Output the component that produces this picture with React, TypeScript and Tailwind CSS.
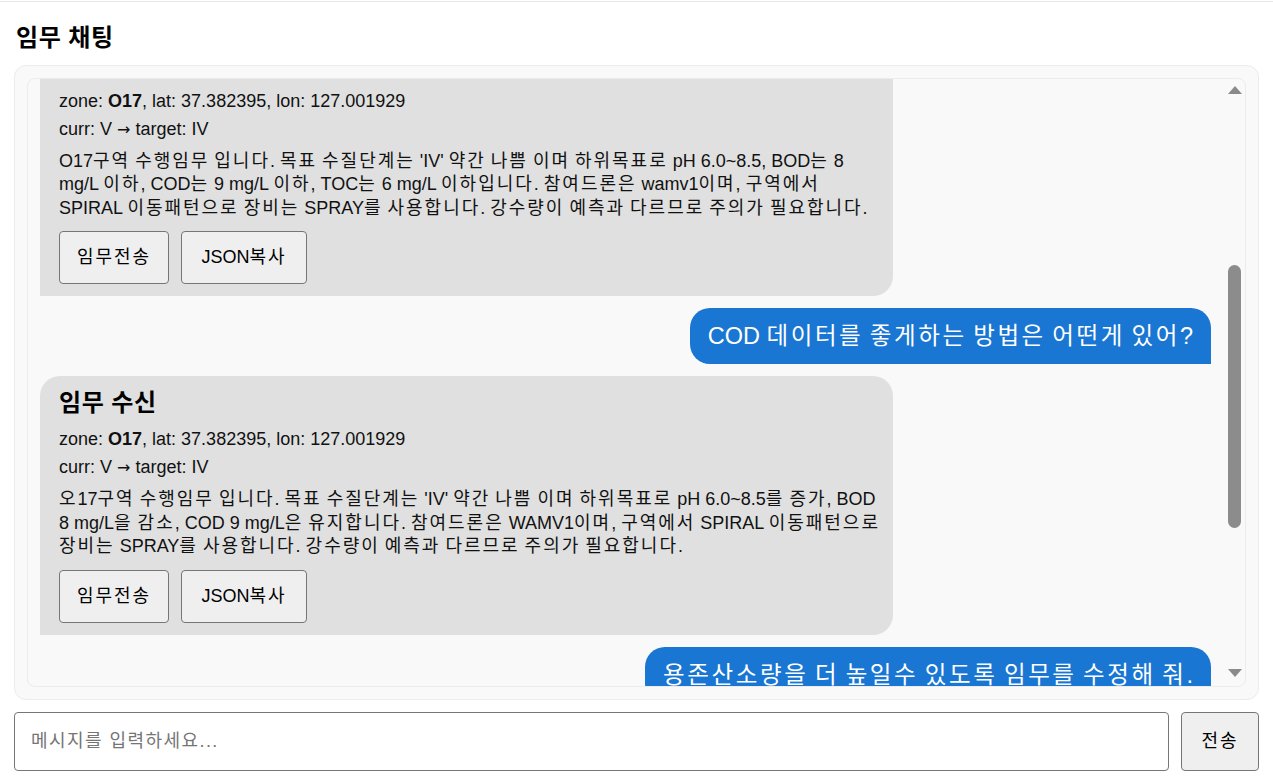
import { useLayoutEffect, useRef } from 'react'

type Mission = {
  title?: string
  zone: string
  lat: string
  lon: string
  curr: string
  target: string
  text: string
}

type Message =
  | { id: number; role: 'user'; text: string }
  | { id: number; role: 'mission'; mission: Mission; anchor?: boolean }

const base = { zone: 'O17', lat: '37.382395', lon: '127.001929', curr: 'V', target: 'IV' }

const messages: Message[] = [
  { id: 1, role: 'user', text: 'O17 구역 수질 개선 임무를 만들어 줘.' },
  {
    id: 2,
    role: 'mission',
    mission: {
      ...base,
      title: '임무 수신',
      text: "O17구역 수행임무 입니다. 목표 수질단계는 'IV' 약간 나쁨 이며 하위목표로 pH 6.0~8.5, BOD는 8 mg/L 이하, COD는 9 mg/L 이하, TOC는 6 mg/L 이하입니다. 참여드론은 wamv1이며, 구역에서 SPIRAL 이동패턴으로 장비는 SPRAY를 사용합니다.",
    },
  },
  {
    id: 3,
    role: 'mission',
    anchor: true,
    mission: {
      ...base,
      title: '임무 수신',
      text: "O17구역 수행임무 입니다. 목표 수질단계는 'IV' 약간 나쁨 이며 하위목표로 pH 6.0~8.5, BOD는 8 mg/L 이하, COD는 9 mg/L 이하, TOC는 6 mg/L 이하입니다. 참여드론은 wamv1이며, 구역에서 SPIRAL 이동패턴으로 장비는 SPRAY를 사용합니다. 강수량이 예측과 다르므로 주의가 필요합니다.",
    },
  },
  { id: 4, role: 'user', text: 'COD 데이터를 좋게하는 방법은 어떤게 있어?' },
  {
    id: 5,
    role: 'mission',
    mission: {
      ...base,
      title: '임무 수신',
      text: "오17구역 수행임무 입니다. 목표 수질단계는 'IV' 약간 나쁨 이며 하위목표로 pH 6.0~8.5를 증가, BOD 8 mg/L을 감소, COD 9 mg/L은 유지합니다. 참여드론은 WAMV1이며, 구역에서 SPIRAL 이동패턴으로 장비는 SPRAY를 사용합니다. 강수량이 예측과 다르므로 주의가 필요합니다.",
    },
  },
  { id: 6, role: 'user', text: '용존산소량을 더 높일수 있도록 임무를 수정해 줘.' },
  {
    id: 7,
    role: 'mission',
    mission: {
      ...base,
      title: '임무 수신',
      text: "O17구역 수행임무 입니다. 목표 수질단계는 'IV' 약간 나쁨 이며 하위목표로 DO 7 mg/L 이상을 증가, BOD 8 mg/L을 감소, COD 9 mg/L은 유지합니다. 참여드론은 WAMV1이며, 구역에서 SPIRAL 이동패턴으로 장비는 AERATOR를 사용합니다.",
    },
  },
]

// hangul in the original font runs wider than Noto CJK, so give those runs a bit of tracking
const hangul = /([\uAC00-\uD7A3]+)/

function K({ children, tight }: { children: string; tight?: boolean }) {
  return (
    <>
      {children.split(hangul).map((part, i) =>
        hangul.test(part) ? (
          <span key={i} className={tight ? 'tracking-[0.03em]' : 'tracking-[0.11em]'}>
            {part}
          </span>
        ) : (
          part
        ),
      )}
    </>
  )
}

const btn = 'h-[53px] rounded-[4px] border border-[#767676] bg-[#efefef] text-[18px] text-black'

function MissionBubble({ mission, anchorRef }: { mission: Mission; anchorRef?: React.Ref<HTMLDivElement> }) {
  return (
    <div
      ref={anchorRef}
      className="w-[853px] rounded-[20px] rounded-bl-none bg-[#e0e0e0] pt-[12px] pr-[12px] pb-[12px] pl-[19px] text-[18px] text-[#111]"
    >
      {mission.title ? (
        <h3 className="text-[24px] leading-[30px] font-bold text-black">
          <K tight>{mission.title}</K>
        </h3>
      ) : null}
      <p className="mt-[9px] leading-[24px]">
        zone: <b>{mission.zone}</b>, lat: {mission.lat}, lon: {mission.lon}
      </p>
      <p className="mt-[4px] leading-[24px]">
        curr: {mission.curr} <span className="[font-family:'DejaVu_Sans',sans-serif] text-[16px]">→</span> target:{' '}
        {mission.target}
      </p>
      <p className="mt-[8px] leading-[23.5px]">
        <K>{mission.text}</K>
      </p>
      <div className="mt-[11px] flex gap-[12px]">
        <button type="button" className={btn + ' w-[110px]'}>
          <K>임무전송</K>
        </button>
        <button type="button" className={btn + ' w-[126px]'}>
          JSON<K>복사</K>
        </button>
      </div>
    </div>
  )
}

function ScrollTrack() {
  return (
    <div className="flex w-[21px] shrink-0 flex-col items-center pt-[7px] pb-[9px]">
      <svg width="14" height="8" viewBox="0 0 14 8" className="ml-[1px]">
        <path d="M7 0 L14 8 L0 8 Z" fill="#8a8a8a" />
      </svg>
      <div className="mt-[171px] h-[263px] w-[13px] rounded-full bg-[#8c8c8c]" />
      <div className="flex-1" />
      <svg width="14" height="8" viewBox="0 0 14 8" className="ml-[1px]">
        <path d="M0 0 L14 0 L7 8 Z" fill="#8a8a8a" />
      </svg>
    </div>
  )
}

export default function App() {
  const scrollRef = useRef<HTMLDivElement>(null)
  const anchorRef = useRef<HTMLDivElement>(null)

  useLayoutEffect(() => {
    const box = scrollRef.current
    const anchor = anchorRef.current
    if (!box || !anchor) return
    // keep the second mission bubble 41px above the visible top
    box.scrollTop = anchor.offsetTop + 41
  }, [])

  return (
    <div className="h-screen bg-white px-[14px] [font-family:'Liberation_Sans','Noto_Sans_CJK_KR',sans-serif] text-[#111]">
      <div className="-mx-[14px] h-[2px] border-b border-[#e8e8e8]" />
      <h2 className="pt-[21px] pl-[2px] text-[24px] leading-[30px] font-bold text-black">
        <K tight>임무 채팅</K>
      </h2>

      <div className="mt-[12px] h-[635px] rounded-[12px] border border-[#ececec] bg-[#f9f9f9] p-[12px]">
        <div className="flex h-full overflow-hidden rounded-[8px] border border-[#ececec] bg-[#f9f9f9]">
          <div ref={scrollRef} className="relative min-w-0 flex-1 overflow-y-auto [scrollbar-width:none]">
            <div className="flex flex-col gap-[12px] py-[12px] pr-[13px] pl-[12px]">
              {messages.map((m) =>
                m.role === 'user' ? (
                  <div key={m.id} className="flex justify-end">
                    <div className="rounded-[20px] rounded-br-none bg-[#1976d2] px-[18px] py-[12px] text-[23.5px] leading-[32px] text-white">
                      <K>{m.text}</K>
                    </div>
                  </div>
                ) : (
                  <div key={m.id} className="flex">
                    <MissionBubble mission={m.mission} anchorRef={m.anchor ? anchorRef : undefined} />
                  </div>
                ),
              )}
            </div>
          </div>
          <ScrollTrack />
        </div>
      </div>

      <div className="mt-[12px] flex gap-[12px]">
        <input
          placeholder="메시지를 입력하세요..."
          className="h-[59px] flex-1 rounded-[4px] border border-[#767676] bg-white px-[16px] text-[18px] tracking-[0.08em] text-[#111] outline-none placeholder:text-[#757575]"
        />
        <button
          type="button"
          className="h-[59px] w-[78px] rounded-[4px] border border-[#767676] bg-[#efefef] text-[18px] text-black"
        >
          <K>전송</K>
        </button>
      </div>
    </div>
  )
}
